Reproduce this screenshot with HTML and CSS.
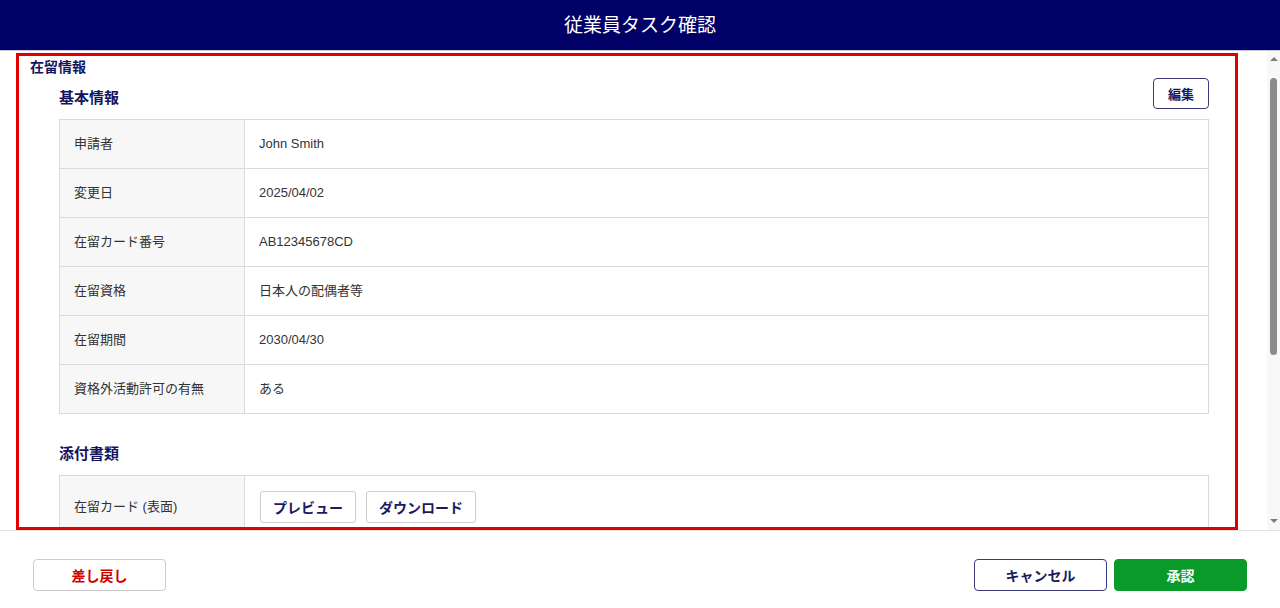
FILE: index.html
```html
<!DOCTYPE html>
<html lang="ja">
<head>
<meta charset="utf-8">
<title>従業員タスク確認</title>
<link rel="stylesheet" href="styles.css">
</head>
<body>
<div class="app">
  <header class="topbar">従業員タスク確認</header>
  <div class="body-row">
    <main class="scroll">
      <section class="panel">
        <h1 class="panel-title">在留情報</h1>
        <div class="sub">
          <div class="sub-head">
            <h2 class="sub-title">基本情報</h2>
            <button class="btn btn-edit">編集</button>
          </div>
          <table class="info">
            <tr><th>申請者</th><td>John Smith</td></tr>
            <tr><th>変更日</th><td>2025/04/02</td></tr>
            <tr><th>在留カード番号</th><td>AB12345678CD</td></tr>
            <tr><th>在留資格</th><td>日本人の配偶者等</td></tr>
            <tr><th>在留期間</th><td>2030/04/30</td></tr>
            <tr><th>資格外活動許可の有無</th><td>ある</td></tr>
          </table>
        </div>
        <div class="sub sub-attach">
          <h2 class="sub-title">添付書類</h2>
          <table class="info files">
            <tr><th>在留カード (表面)</th><td><div class="actions"><button class="btn btn-file">プレビュー</button><button class="btn btn-file">ダウンロード</button></div></td></tr>
          </table>
        </div>
      </section>
    </main>
    <div class="vscroll" aria-hidden="true">
      <span class="arrow arrow-up"></span>
      <span class="thumb"></span>
      <span class="arrow arrow-down"></span>
    </div>
  </div>
  <footer class="footer">
    <button class="btn btn-foot btn-back">差し戻し</button>
    <div class="foot-right">
      <button class="btn btn-foot btn-cancel">キャンセル</button>
      <button class="btn btn-foot btn-ok">承認</button>
    </div>
  </footer>
</div>
<div class="highlight"></div>
</body>
</html>
```
FILE: styles.css
```css
* { box-sizing: border-box; }
html, body { margin: 0; padding: 0; height: 100%; }
body {
  font-family: "Liberation Sans", "Noto Sans CJK JP", sans-serif;
  color: #333;
  background: #fff;
  overflow: hidden;
}
.app {
  display: flex;
  flex-direction: column;
  height: 608px;
}
.topbar {
  height: 51px;
  flex: 0 0 51px;
  background: #000066;
  border-bottom: 1px solid #c9c9d6;
  color: #fff;
  font-family: "Noto Sans CJK JP", sans-serif;
  font-size: 19px;
  font-weight: 400;
  display: flex;
  align-items: center;
  justify-content: center;
  padding-bottom: 3px;
}
.body-row {
  flex: 0 0 480px;
  height: 480px;
  display: flex;
  border-bottom: 1px solid #e3e3e3;
}
.scroll {
  flex: 1;
  overflow: hidden;
}
.vscroll {
  width: 13px;
  flex: 0 0 13px;
  background: #f8f8f8;
  display: flex;
  flex-direction: column;
  align-items: center;
  padding: 6px 0 7px;
}
.arrow {
  width: 0;
  height: 0;
  border-left: 4px solid transparent;
  border-right: 4px solid transparent;
}
.arrow-up { border-bottom: 4px solid #7d7d7d; }
.arrow-down { border-top: 4px solid #7d7d7d; margin-top: auto; }
.thumb {
  width: 7px;
  height: 277px;
  margin-top: 17px;
  background: #8a8a8a;
  border-radius: 4px;
}
.panel {
  margin: 0 29px 0 30px;
  padding: 5px 0 40px;
}
h1, h2 { margin: 0; font-family: "Noto Sans CJK JP", sans-serif; }
.panel-title {
  font-size: 14px;
  line-height: 20px;
  font-weight: 700;
  color: #14145e;
}
.sub { padding: 0 29px; }
.sub-head {
  display: flex;
  justify-content: space-between;
  align-items: center;
  margin-top: 2px;
}
.sub-title {
  font-size: 15px;
  line-height: 20px;
  font-weight: 700;
  color: #14145e;
}
.sub-head .sub-title { margin-top: 7px; }
.btn {
  font-family: "Noto Sans CJK JP", sans-serif;
  background: #fff;
  cursor: pointer;
  font-weight: 700;
  padding: 0;
  line-height: normal;
}
.btn-edit {
  width: 56px;
  height: 31px;
  border: 1px solid #3a3a78;
  border-radius: 4px;
  color: #1a1a5e;
  font-size: 13px;
}
.info {
  width: 100%;
  border-collapse: collapse;
  margin-top: 10px;
  font-size: 13px;
  line-height: 18px;
}
.info th, .info td {
  border: 1px solid #dadada;
  height: 49px;
  padding: 0 14px 1px;
  text-align: left;
  font-weight: 400;
  color: #333;
}
.info th {
  width: 185px;
  background: #f7f7f7;
}
.sub-attach { margin-top: 29px; }
.files { margin-top: 12px; }
.files th, .files td { height: 63px; }
.files td { padding: 0 15px; }
.actions { display: flex; gap: 10px; }
.btn-file {
  height: 32px;
  padding: 0 12px;
  border: 1px solid #cfcfcf;
  border-radius: 3px;
  color: #1a1a5e;
  font-size: 14px;
}
.footer {
  flex: 1;
  display: flex;
  justify-content: space-between;
  align-items: flex-start;
  padding: 28px 33px 0;
}
.foot-right { display: flex; gap: 7px; }
.btn-foot {
  width: 133px;
  height: 32px;
  border-radius: 4px;
  font-size: 14px;
}
.btn-back { border: 1px solid #cccccc; color: #d00000; }
.btn-cancel { border: 1px solid #3a3a78; color: #1a1a5e; }
.btn-ok { border: 1px solid #0a9a2a; background: #0a9a2a; color: #fff; }
.highlight {
  position: fixed;
  left: 16px;
  top: 53px;
  width: 1222px;
  height: 477px;
  border: 3px solid #e00000;
  pointer-events: none;
}
```
